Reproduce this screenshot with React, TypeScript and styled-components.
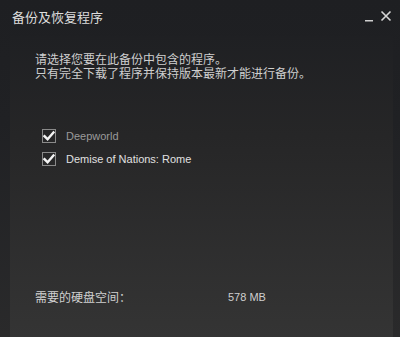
import React from "react";
import styled, { createGlobalStyle } from "styled-components";

const Global = createGlobalStyle`
  html, body { margin: 0; padding: 0; background: #1e1f22; }
  body { font-family: "Liberation Sans", Arial, "Noto Sans CJK SC", sans-serif; }
`;

const Window = styled.div`
  width: 400px;
  height: 337px;
  box-sizing: border-box;
  display: flex;
  flex-direction: column;
  background: linear-gradient(to bottom, #1e1f22 0px, #202124 120px, #2a2a2b 337px);
  overflow: hidden;
`;

const TitleBar = styled.div`
  height: 36px;
  display: flex;
  align-items: flex-start;
  justify-content: space-between;
  padding: 9px 8px 0 12px;
  box-sizing: border-box;
`;

const Title = styled.div`
  font-family: "Noto Sans CJK SC", sans-serif;
  font-size: 13px;
  line-height: 16px;
  color: #dcdcdc;
`;

const Controls = styled.div`
  display: flex;
  align-items: flex-start;
  gap: 5px;
`;

const CtrlBtn = styled.div`
  width: 12px;
  height: 14px;
  display: flex;
  align-items: center;
  justify-content: center;
`;

const Panel = styled.div`
  flex: 1;
  margin: 0 7px 0 10px;
  padding: 16px 0 0 25px;
  display: flex;
  flex-direction: column;
  background: linear-gradient(to bottom, #1f2023 0px, #262627 100px, #343434 301px);
`;

const Desc = styled.div`
  font-family: "Noto Sans CJK SC", sans-serif;
  font-size: 12px;
  line-height: 14px;
  color: #cfcfcf;
`;

const List = styled.div`
  margin-top: 49px;
  margin-left: 7px;
  display: flex;
  flex-direction: column;
  gap: 9px;
`;

const Row = styled.div`
  display: flex;
  align-items: center;
  gap: 10px;
  height: 14px;
`;

const Box = styled.div`
  width: 12px;
  height: 12px;
  border: 1px solid #8a8a8a;
  display: flex;
  align-items: center;
  justify-content: center;
`;

const Label = styled.span<{ $dim?: boolean }>`
  font-size: 11px;
  color: ${(p) => (p.$dim ? "#9a9a9a" : "#e0e0e0")};
`;

const Footer = styled.div`
  margin-top: auto;
  margin-bottom: 32px;
  display: flex;
  align-items: center;
  font-family: "Noto Sans CJK SC", sans-serif;
  font-size: 12px;
  color: #cfcfcf;
`;

const FooterLabel = styled.span`
  width: 193px;
`;

const Size = styled.span`
  font-family: "Liberation Sans", Arial, sans-serif;
  font-size: 11px;
  color: #cfcfcf;
`;

const Check = () => (
  <svg width="12" height="12" viewBox="0 0 12 12">
    <path d="M1.5 6.2 L4.6 9.3 L10.5 2.5" fill="none" stroke="#f4f4f4" strokeWidth="2.4" strokeLinecap="square" />
  </svg>
);

export default function App() {
  return (
    <>
      <Global />
      <Window>
        <TitleBar>
          <Title>备份及恢复程序</Title>
          <Controls>
            <CtrlBtn>
              <svg width="10" height="14" viewBox="0 0 10 14">
                <rect x="1" y="11" width="8" height="1.5" fill="#cfcfcf" />
              </svg>
            </CtrlBtn>
            <CtrlBtn>
              <svg width="12" height="12" viewBox="0 0 12 12">
                <path d="M1.5 1.5 L10.5 10.5 M10.5 1.5 L1.5 10.5" stroke="#d6d6d6" strokeWidth="1.6" />
              </svg>
            </CtrlBtn>
          </Controls>
        </TitleBar>
        <Panel>
          <Desc>
            请选择您要在此备份中包含的程序。
            <br />
            只有完全下载了程序并保持版本最新才能进行备份。
          </Desc>
          <List>
            <Row>
              <Box><Check /></Box>
              <Label $dim>Deepworld</Label>
            </Row>
            <Row>
              <Box><Check /></Box>
              <Label>Demise of Nations: Rome</Label>
            </Row>
          </List>
          <Footer>
            <FooterLabel>需要的硬盘空间：</FooterLabel>
            <Size>578 MB</Size>
          </Footer>
        </Panel>
      </Window>
    </>
  );
}
